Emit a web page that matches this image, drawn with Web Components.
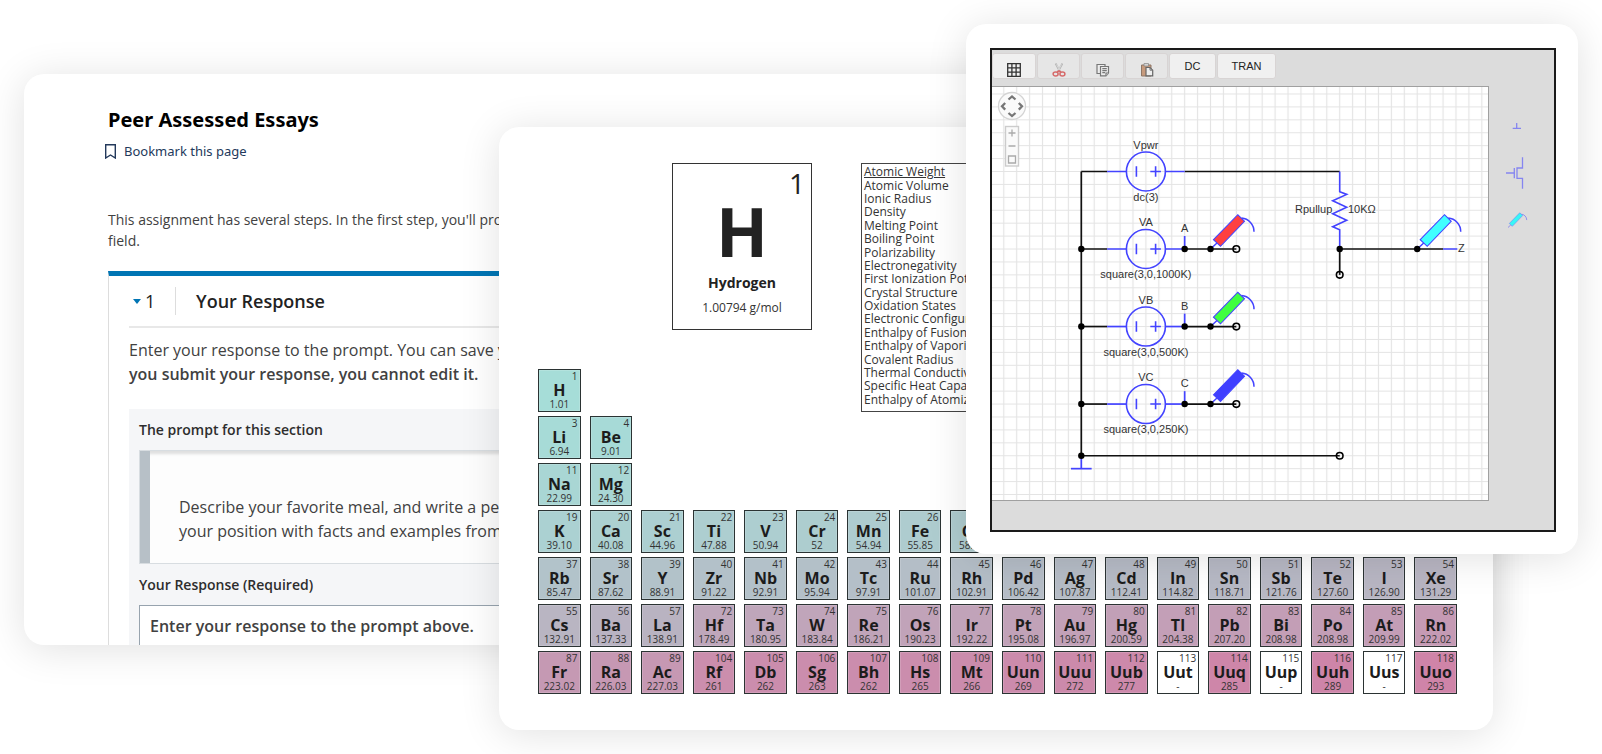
<!DOCTYPE html>
<html lang="en">
<head>
<meta charset="utf-8">
<title>Course tools</title>
<style>
  body { margin: 0; background: #fff; font-family: "Open Sans", sans-serif; color: #414141; }
</style>
</head>
<body>
<tool-showcase>
  <peer-essay slot="essay"></peer-essay>
  <periodic-table slot="table"></periodic-table>
  <circuit-lab slot="circuit"></circuit-lab>
</tool-showcase>

<template id="showcase">
  <style>
    :host {
      display: grid; min-height: 100vh; overflow: hidden;
      grid-template-columns: minmax(0,24fr) minmax(0,475fr) minmax(0,467fr) minmax(0,527fr) minmax(0,85fr) minmax(0,24fr);
    }
    .card { grid-row: 1; border-radius: 20px; background: #fff; box-shadow: 0 4px 40px rgba(0,0,0,.12); overflow: hidden; }
    .essay { grid-column: 2 / 5; margin: 74px 0 109px; }
    .table { grid-column: 3 / 5; margin: 127px 0 24px; align-self: start; }
    .circuit { grid-column: 4 / 6; margin: 24px 0; align-self: start; }
  </style>
  <div class="card essay"><slot name="essay"></slot></div>
  <div class="card table"><slot name="table"></slot></div>
  <div class="card circuit"><slot name="circuit"></slot></div>
</template>

<template id="essay">
  <style>
    :host { display: block; padding: 32px 0 0 84px; }
    h1 { margin: 0; font: 700 20px/28px "Noto Sans", sans-serif; color: #000; }
    a { display: flex; align-items: center; gap: 8px; margin: 5px 0 0 -3px; font: 13px/24px "Noto Sans", sans-serif; color: #23395b; text-decoration: none; }
    .intro { margin: 46px 0 20px; font-size: 14px; line-height: 21px; }
    section { border-top: 5px solid #0075b4; border-left: 1px solid #ddd; padding-left: 20px; }
    header { display: flex; align-items: center; height: 50px; border-bottom: 2px solid #e8e8e8; color: #222; }
    header svg { margin: 0 4px; }
    .num { width: 30px; font-size: 18px; line-height: 26px; }
    h2 { margin: 0; padding-left: 20px; border-left: 1px solid #ddd; font-size: 18px; line-height: 28px; font-weight: 600; }
    .help { margin: 10px 0 23px; font-size: 16px; line-height: 24px; }
    b { font-weight: 600; }
    .box { background: #f5f6f8; padding: 11px 0 0 10px; }
    h3, label { display: block; margin: 0; font-size: 14px; line-height: 20px; font-weight: 600; color: #2d2d2d; }
    .prompt { margin: 10px 0 11px; border: 1px solid #d8dde1; background: #fdfdfd; box-shadow: inset 10px 0 #b7c0c7, inset 0 3px 3px rgba(0,0,0,.12); padding: 44px 0 20px 39px; font-size: 16px; line-height: 24px; }
    textarea { display: block; box-sizing: border-box; width: 100%; height: 40px; margin: 10px 0 0; padding: 8px 10px; border: 1px solid #97a3ae; border-width: 1px 0 0 1px; border-radius: 0; background: #fff; resize: none; overflow: hidden; font: 600 16px/24px "Open Sans", sans-serif; color: #414141; outline: none; }
  </style>
  <h1>Peer Assessed Essays</h1>
  <a href="#bookmark"><svg width="11" height="15" viewBox="0 0 11 15" fill="none" stroke="#23395b" stroke-width="1.4"><path d="M.7 .7H10.3V14L5.5 11L.7 14Z"/></svg>Bookmark this page</a>
  <p class="intro">This assignment has several steps. In the first step, you'll provide<br>field.</p>
  <section>
    <header>
      <svg width="8" height="5" viewBox="0 0 8 5"><path d="M0 0H8L4 5Z" fill="#0075b4"/></svg>
      <span class="num">1</span>
      <h2>Your Response</h2>
    </header>
    <p class="help">Enter your response to the prompt. You can save your<br><b>you submit your response, you cannot edit it.</b></p>
    <div class="box">
      <h3>The prompt for this section</h3>
      <div class="prompt">Describe your favorite meal, and write a persuasive<br>your position with facts and examples from</div>
      <label for="answer">Your Response (Required)</label>
      <textarea id="answer">Enter your response to the prompt above.</textarea>
    </div>
  </section>
</template>

<template id="periodic">
  <style>
    :host { display: grid; padding: 36px 36px 36px 39px; grid-template-columns: repeat(18, minmax(0,1fr)); grid-template-rows: 202px; grid-auto-rows: 43px; gap: 4px 9px; color: #222; }
    .top { grid-area: 1 / 1 / 3 / -1; display: flex; gap: 49px; padding-left: 134px; align-items: flex-start; }
    .detail { box-sizing: border-box; width: 140px; border: 1px solid #333; padding: 5px 0 11px; text-align: center; }
    .detail div { line-height: 20px; }
    .detail .no { font-size: 28px; line-height: 28px; text-align: right; padding-right: 6px; }
    .detail .sym { font-size: 68px; line-height: 68px; font-weight: 700; }
    .detail .name { margin: 8px 0 5px; font-size: 14px; font-weight: 700; }
    .detail .wt { font-size: 12px; color: #333; }
    ul { box-sizing: border-box; align-self: stretch; width: 180px; margin: 0; padding: 1px 2px 5px; border: 1px solid #444; list-style: none; display: grid; grid-auto-rows: minmax(0,1fr); }
    li { display: flex; align-items: center; min-height: 0; }
    button { border: 0; padding: 0; background: none; font: 12px/13px "Open Sans", sans-serif; color: #333; white-space: nowrap; }
    .on { text-decoration: underline; }
  </style>
  <div class="top">
    <div class="detail"><div class="no">1</div><div class="sym">H</div><div class="name">Hydrogen</div><div class="wt">1.00794 g/mol</div></div>
    <ul></ul>
  </div>
</template>

<template id="cell">
  <style>
    :host { display: block; box-sizing: border-box; height: 43px; border: 1px solid #2b3333; text-align: center; background: var(--tint, #fff); box-shadow: inset 0 0 0 1px rgba(255,255,255,.15); font-size: 10px; line-height: 12px; color: #333; }
    div { text-align: right; padding-right: 2px; }
    b { display: block; font-size: 16px; line-height: 16px; color: #1c1c1c; }
    span { display: block; }
  </style>
  <div></div><b></b><span></span>
</template>

<template id="circuit">
  <style>
    :host { display: block; padding: 24px 22px 22px 24px; }
    .frame { border: 2px solid #1a1a1a; background: #dcdcdc; padding-bottom: 29px; }
    .bar { display: flex; gap: 1px; padding: 3px 0 7px; }
    button { box-sizing: border-box; width: 43px; height: 26px; padding: 0; border: 1px solid #d8d4d4; border-radius: 3px; background: #f0f0f0; font: 11px/24px "Liberation Sans", sans-serif; color: #222; }
    button:first-child { width: 44px; }
    button svg { display: block; margin: 8px auto 0; }
    button:disabled { background: #e6e6e6; }
    .bar .dc { width: 47px; } .bar .tran { width: 59px; }
    .work { display: grid; grid-template-columns: minmax(0,497fr) minmax(0,65fr); }
    .work svg { display: block; width: 100%; }
    .board { background: #fff; border: 1px solid #a0a0a0; border-left: 0; }
    text { font: 11px "Liberation Sans", sans-serif; fill: #333; }
  </style>
  <div class="frame">
    <div class="bar">
      <button aria-label="Grid"><svg width="14" height="14" viewBox="0 0 14 14" fill="none" stroke="#333" stroke-width="1.3"><path d="M.7 .7H13.3V13.3H.7ZM4.9 .7V13.3M9.1 .7V13.3M.7 4.9H13.3M.7 9.1H13.3"/></svg></button>
      <button aria-label="Cut" disabled><svg width="14" height="14" viewBox="0 0 14 14" fill="none"><path d="M3.6 .5L8.2 9M10.4 .5L5.8 9" stroke="#b5b5b5" stroke-width="1.8"/><path d="M4.4 1.4L8 8M9.6 1.4L6 8" stroke="#eee" stroke-width=".6"/><path d="M7 7.6L5 9.2M7 7.6L9 9.2" stroke="#d66b6b" stroke-width="1.6"/><ellipse cx="3.6" cy="10.9" rx="2.5" ry="2" stroke="#d66b6b" stroke-width="1.5"/><ellipse cx="10.4" cy="10.9" rx="2.5" ry="2" stroke="#d66b6b" stroke-width="1.5"/></svg></button>
      <button aria-label="Copy" disabled><svg width="14" height="14" viewBox="0 0 14 14" fill="#ededed" stroke="#777" stroke-width="1.2"><path d="M1 1.5H9V10.5H1Z"/><path d="M4.5 3.5H12.5V10L10 12.8H4.5Z"/><path d="M6.3 5.7H10.8M6.3 7.7H10.8M6.3 9.7H9M12.5 10H10V12.8"/></svg></button>
      <button aria-label="Paste" disabled><svg width="14" height="14" viewBox="0 0 14 14"><path d="M1.5 2H11V13H1.5Z" fill="#c79a7c" stroke="#8f7766"/><path d="M4 .6H8.5V3H4Z" fill="#ddd" stroke="#888" stroke-width=".8"/><path d="M6 4.5H10L12.7 7.2V12.8H6Z" fill="#eee" stroke="#666" stroke-width="1.2"/><path d="M10 4.5V7.2H12.7" fill="none" stroke="#777"/></svg></button>
      <button class="dc">DC</button>
      <button class="tran">TRAN</button>
    </div>
    <div class="work">
      <div class="board"></div>
      <div class="parts"></div>
    </div>
  </div>
</template>

<script>
  class Templated extends HTMLElement {
    constructor() {
      super();
      this.attachShadow({ mode: 'open' }).append(
        document.getElementById(this.constructor.template).content.cloneNode(true));
    }
    $(sel) { return this.shadowRoot.querySelector(sel); }
  }

  class ToolShowcase extends Templated { static template = 'showcase'; }
  class PeerEssay extends Templated { static template = 'essay'; }

  class ElementCell extends Templated {
    static template = 'cell';
    connectedCallback() {
      const weight = this.getAttribute('weight');
      this.$('div').textContent = this.getAttribute('number');
      this.$('b').textContent = this.getAttribute('symbol');
      this.$('span').textContent = weight;
      if (weight !== '-') {
        // light elements are teal, heavy ones pink
        const t = parseFloat(weight) / 293;
        const mix = (a, b) => Math.round(a + (b - a) * t);
        this.style.setProperty('--tint', `rgb(${mix(166, 207)},${mix(221, 132)},${mix(216, 168)})`);
      }
    }
  }

  const ROWS = [
    '1 H 1.01',
    '3 Li 6.94|4 Be 9.01',
    '11 Na 22.99|12 Mg 24.30',
    '19 K 39.10|20 Ca 40.08|21 Sc 44.96|22 Ti 47.88|23 V 50.94|24 Cr 52|25 Mn 54.94|26 Fe 55.85|27 Co 58.93',
    '37 Rb 85.47|38 Sr 87.62|39 Y 88.91|40 Zr 91.22|41 Nb 92.91|42 Mo 95.94|43 Tc 97.91|44 Ru 101.07|45 Rh 102.91|46 Pd 106.42|47 Ag 107.87|48 Cd 112.41|49 In 114.82|50 Sn 118.71|51 Sb 121.76|52 Te 127.60|53 I 126.90|54 Xe 131.29',
    '55 Cs 132.91|56 Ba 137.33|57 La 138.91|72 Hf 178.49|73 Ta 180.95|74 W 183.84|75 Re 186.21|76 Os 190.23|77 Ir 192.22|78 Pt 195.08|79 Au 196.97|80 Hg 200.59|81 Tl 204.38|82 Pb 207.20|83 Bi 208.98|84 Po 208.98|85 At 209.99|86 Rn 222.02',
    '87 Fr 223.02|88 Ra 226.03|89 Ac 227.03|104 Rf 261|105 Db 262|106 Sg 263|107 Bh 262|108 Hs 265|109 Mt 266|110 Uun 269|111 Uuu 272|112 Uub 277|113 Uut -|114 Uuq 285|115 Uup -|116 Uuh 289|117 Uus -|118 Uuo 293',
  ];
  const PROPERTIES = ['Atomic Weight', 'Atomic Volume', 'Ionic Radius', 'Density', 'Melting Point', 'Boiling Point',
    'Polarizability', 'Electronegativity', 'First Ionization Potential', 'Crystal Structure', 'Oxidation States',
    'Electronic Configuration', 'Enthalpy of Fusion', 'Enthalpy of Vaporization', 'Covalent Radius',
    'Thermal Conductivity', 'Specific Heat Capacity', 'Enthalpy of Atomization'];

  class PeriodicTable extends Templated {
    static template = 'periodic';
    connectedCallback() {
      this.$('ul').innerHTML = PROPERTIES.map((p, i) =>
        `<li><button${i ? '' : ' class="on"'}>${p}</button></li>`).join('');
      ROWS.forEach((row, r) => row.split('|').forEach((item, c) => {
        const [number, symbol, weight] = item.split(' ');
        const cell = document.createElement('element-cell');
        cell.setAttribute('number', number);
        cell.setAttribute('symbol', symbol);
        cell.setAttribute('weight', weight);
        cell.style.gridArea = `${r + 2} / ${c + 1}`;
        this.shadowRoot.append(cell);
      }));
    }
  }

  // Schematic geometry: U is one grid step, (X0, Y0) the top-left wire corner.
  const U = 12.92, X0 = 89.3, Y0 = 84.5, BLUE = '#4343ff';
  const gx = n => +(X0 + n * U).toFixed(2), gy = n => +(Y0 + n * U).toFixed(2);
  const wire = (x1, y1, x2, y2, color = '#111') =>
    `<path d="M${gx(x1)} ${gy(y1)}L${gx(x2)} ${gy(y2)}" stroke="${color}" stroke-width="1.7"/>`;
  const dot = (x, y) => `<circle cx="${gx(x)}" cy="${gy(y)}" r="3.2" fill="#000"/>`;
  const open = (x, y) => `<circle cx="${gx(x)}" cy="${gy(y)}" r="3.3" fill="none" stroke="#000" stroke-width="1.6"/>`;
  const probe = (fill, transform) => `<g transform="${transform}" fill="none" stroke="${BLUE}" stroke-width="1.5">
    <path d="M0 0L6.5 -6M31 -31A13.5 13.5 0 0 1 43.5 -17.3"/><path d="M3 -9.3L27.3 -34.3L34 -27.7L10 -2.7Z" fill="${fill}" stroke-width="1.1"/></g>`;
  const source = (row, name, value) => wire(2, row, 3.5, row, BLUE) + wire(6.5, row, 8, row, BLUE) +
    `<g transform="translate(${gx(5)} ${gy(row)})"><g fill="none" stroke="${BLUE}" stroke-width="1.6">
    <circle r="19.5"/><path d="M-9.5 -5.3V5.3M4.4 0H15M9.7 -5.3V5.3"/></g>
    <text text-anchor="middle" y="-23">${name}</text><text text-anchor="middle" y="29">${value}</text></g>`;
  const branch = (row, v, value, label, color) => wire(0, row, 2, row) + source(row, v, value) +
    wire(8, row - 1, 8, row, BLUE) + wire(8, row, 12, row) + probe(color, `translate(${gx(10)} ${gy(row)})`) +
    dot(0, row) + dot(8, row) + dot(10, row) + open(12, row) +
    `<text text-anchor="middle" x="${gx(8)}" y="${gy(row) - 17}">${label}</text>`;

  class CircuitLab extends Templated {
    static template = 'circuit';
    connectedCallback() {
      const rx = gx(20);
      this.$('.board').innerHTML = `<svg viewBox="0 0 496 413">
        <defs><pattern id="grid" patternUnits="userSpaceOnUse" x="${X0 - U / 2}" y="${Y0 - U / 2}" width="${U}" height="${U}">
          <path d="M${U / 2} 0V${U}M0 ${U / 2}H${U}" stroke="#e4e4e4" stroke-width="1.2"/></pattern></defs>
        <rect width="496" height="413" fill="url(#grid)"/>
        <circle cx="20" cy="19" r="13.5" fill="#fafafa" stroke="#d4d4d4" stroke-width="1.3"/>
        <path d="M16.5 12.5L20 9.5L23.5 12.5M16.5 26L20 29L23.5 26M13.2 16L10 19.3L13.2 22.6M26.8 16L30 19.3L26.8 22.6" fill="none" stroke="#777" stroke-width="2.3"/>
        <rect x="13.5" y="39.5" width="13" height="39.5" fill="#fafafa" stroke="#ccc" stroke-width="1.4"/>
        <path d="M16.5 46H23.5M20 42.5V49.5M16.5 59H23.5M16.5 69H23.5V76H16.5Z" fill="none" stroke="#aaa" stroke-width="1.3"/>
        ${wire(0, 0, 2, 0)}${wire(8, 0, 20, 0)}${wire(0, 0, 0, 22)}${wire(0, 22, 20, 22)}
        ${source(0, 'Vpwr', 'dc(3)')}
        ${branch(6, 'VA', 'square(3,0,1000K)', 'A', '#ff4040')}
        ${branch(12, 'VB', 'square(3,0,500K)', 'B', '#40ff40')}
        ${branch(18, 'VC', 'square(3,0,250K)', 'C', '#4040ff')}
        <path d="M${rx} ${gy(0)}V104.7l7 2.7l-14 6.3l14 6.5l-14 6.5l14 6.5l-14 6.5l7 3V${gy(6)}" fill="none" stroke="${BLUE}" stroke-width="1.6"/>
        <text x="303" y="126">Rpullup</text><text x="356" y="126">10KΩ</text>
        ${wire(20, 6, 28, 6)}${wire(28, 6, 29.1, 6, BLUE)}${wire(20, 6, 20, 8)}
        ${probe('#40ffff', `translate(${gx(26)} ${gy(6)})`)}${dot(20, 6)}${dot(26, 6)}${open(20, 8)}
        <text x="466" y="165">Z</text>
        ${wire(0, 22, 0, 23, BLUE)}${wire(-.8, 23, .8, 23, BLUE)}${dot(0, 22)}${open(20, 22)}
      </svg>`;
      this.$('.parts').innerHTML = `<svg viewBox="0 0 65 413">
        <g fill="none" stroke="#8585f0" stroke-width="1.3"><path d="M27.7 37V42.3M23.7 42.3H32"/>
        <path d="M17 87H25M25.3 82V92.3M33.5 71.3V82H28V92.3H33.5V102.7"/></g>
        <g opacity=".75">${probe('#00ffff', 'translate(19 141.5) scale(.43)')}</g>
      </svg>`;
    }
  }

  customElements.define('tool-showcase', ToolShowcase);
  customElements.define('peer-essay', PeerEssay);
  customElements.define('element-cell', ElementCell);
  customElements.define('periodic-table', PeriodicTable);
  customElements.define('circuit-lab', CircuitLab);
</script>
</body>
</html>
